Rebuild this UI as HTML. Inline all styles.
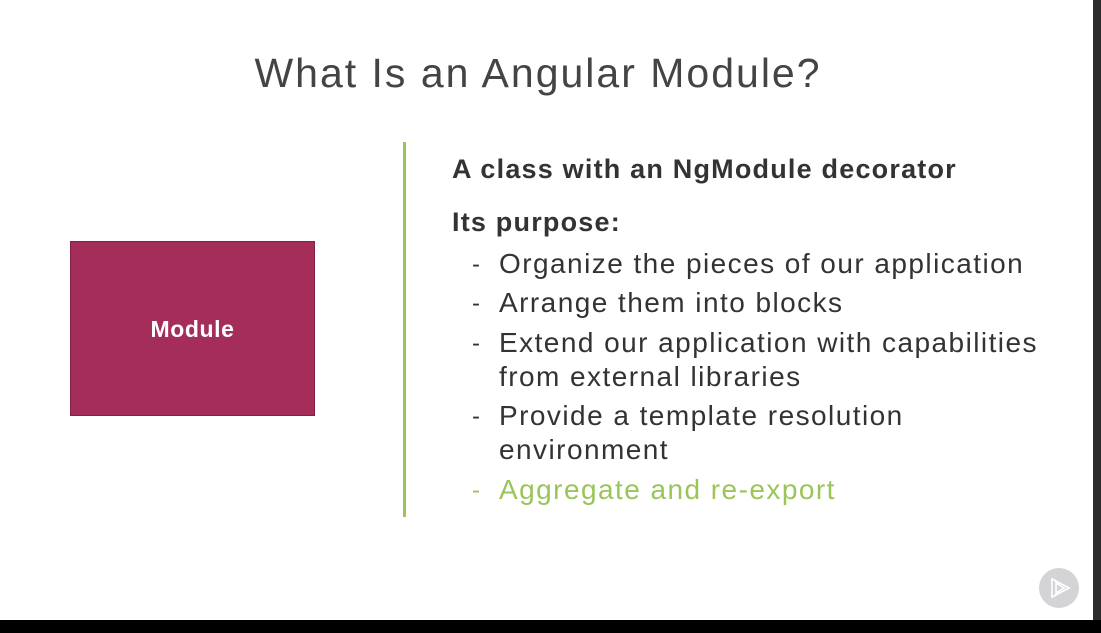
<!DOCTYPE html>
<html><head><meta charset="utf-8"><style>
body{margin:0;width:1101px;height:633px;overflow:hidden;background:#fff;position:relative;font-family:"Liberation Sans",sans-serif;color:#333}
.t{position:absolute;white-space:nowrap}
#right{position:absolute;left:1093px;top:0;width:8px;height:633px;background:#2b2b2b}
#bot{position:absolute;left:0;top:620px;width:1101px;height:13px;background:#000}
.b{font-size:28px;letter-spacing:1.45px}
.d{position:absolute;left:472px;font-size:24px}
</style></head><body>
<div class="t" style="left:0;width:1076px;text-align:center;top:50px;font-size:41px;font-weight:300;color:#444;letter-spacing:2px">What Is an Angular Module?</div>
<div style="position:absolute;left:70px;top:241px;width:243px;height:173px;background:#a52d5a;border:1px solid #861f47"></div>
<div class="t" style="left:70px;width:245px;text-align:center;top:316px;font-size:23px;font-weight:bold;color:#fff;letter-spacing:0.6px">Module</div>
<div style="position:absolute;left:403px;top:142px;width:3px;height:375px;background:#9bc55a"></div>
<div class="t" style="left:452px;top:154px;font-size:27px;font-weight:bold;letter-spacing:1.2px">A class with an NgModule decorator</div>
<div class="t" style="left:452px;top:207px;font-size:27px;font-weight:bold;letter-spacing:1.2px">Its purpose:</div>
<div class="t d" style="top:251px">-</div><div class="t b" style="left:499px;top:248px">Organize the pieces of our application</div>
<div class="t d" style="top:290px">-</div><div class="t b" style="left:499px;top:287px">Arrange them into blocks</div>
<div class="t d" style="top:330px">-</div><div class="t b" style="left:499px;top:327px">Extend our application with capabilities</div>
<div class="t b" style="left:499px;top:361px">from external libraries</div>
<div class="t d" style="top:403px">-</div><div class="t b" style="left:499px;top:400px">Provide a template resolution</div>
<div class="t b" style="left:499px;top:434px">environment</div>
<div class="t d" style="top:477px;color:#9bc55a">-</div><div class="t b" style="left:499px;top:474px;color:#9bc55a">Aggregate and re-export</div>
<svg style="position:absolute;left:1039px;top:568px" width="40" height="40" viewBox="0 0 40 40"><circle cx="20" cy="20" r="20" fill="#d4d4d6"/><path d="M13 11 L30 20 L13 29 Z M17 15 L17 25 L25 20 Z" fill="none" stroke="#fff" stroke-width="1.6"/></svg>
<div id="right"></div><div id="bot"></div>
</body></html>
